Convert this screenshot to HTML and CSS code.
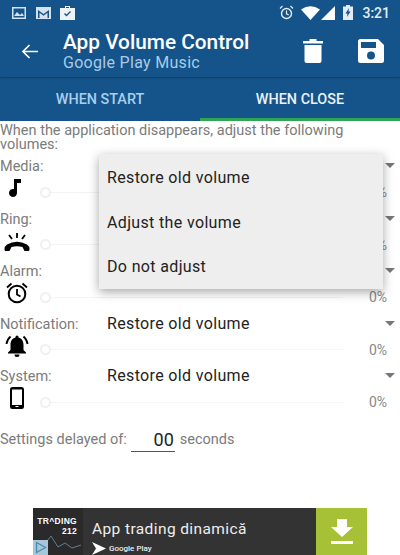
FILE: index.html
```html
<!DOCTYPE html>
<html lang="en">
<head>
    <meta charset="UTF-8">
    <title>App Volume Control</title>
    <link rel="stylesheet" href="styles.css">
</head>
<body>
    <div class="screen">
        <div class="status-bar">
            <svg class="st-icon" width="14" height="12" viewBox="0 0 14 12"><path fill="#d5e2ee" d="M0 0h14v12H0z"/><path fill="#15548a" d="M1.5 1.5h11v9h-11z"/><path fill="#d5e2ee" d="M2 9l3-4 3 3 2-2 2 3z"/></svg>
            <svg class="st-icon gap-m" width="15" height="12" viewBox="0 0 15 12"><path fill="#d5e2ee" d="M0 0h15v12H0z"/><path fill="#15548a" d="M2 3l5.500 4L13 3v8h-1.500V5.800L7.500 8.800 3.500 5.800V11H2z"/></svg>
            <svg class="st-icon gap-b" width="15" height="14" viewBox="0 0 15 14"><path fill="#eef3f8" d="M5 2V0h5v2h5v12H0V2zM6 1v1h3V1z"/><path fill="none" stroke="#15548a" stroke-width="1.300" d="M4.500 7.500l2 2 4-4"/></svg>
            <span class="status-right">
                <svg width="15" height="15" viewBox="0 0 15 15"><circle cx="7.500" cy="8.500" r="5" fill="none" stroke="#e4ecf3" stroke-width="1.400"/><path fill="none" stroke="#e4ecf3" stroke-width="1.200" d="M7.500 5.500v3.300l2.200 1.200M1 3.500L3.500 1M14 3.500L11.500 1"/></svg>
                <svg class="wifi" width="19" height="14" viewBox="0 0 19 14"><path fill="#fff" d="M0 3.500Q9.500-3 19 3.500L9.500 14z"/></svg>
                <svg class="signal" width="14" height="14" viewBox="0 0 14 14"><path fill="#fff" d="M14 0v14H0z"/></svg>
                <svg class="battery" width="10" height="15" viewBox="0 0 10 15"><path fill="#e4ecf3" d="M3 0h4v1.500h3V15H0V1.500h3z"/><path fill="#15548a" d="M6 3L2.500 8.500h2L4 12l3.500-5.500h-2z"/></svg>
                <span class="clock">3:21</span>
            </span>
        </div>

        <div class="toolbar">
            <svg class="back" width="17" height="15" viewBox="0 0 17 15"><path fill="none" stroke="#fff" stroke-width="1.700" d="M17 7.500H2M8.500 1L2 7.500 8.500 14"/></svg>
            <div class="titles">
                <div class="title">App Volume Control</div>
                <div class="subtitle">Google Play Music</div>
            </div>
            <svg class="trash" width="20" height="24" viewBox="0 0 20 24"><path fill="#fff" d="M0 2h6.500V0h7v2H20v2.500H0zM1.500 6h17v16a2 2 0 0 1-2 2h-13a2 2 0 0 1-2-2z"/></svg>
            <svg class="save" width="26" height="24" viewBox="0 0 26 24"><path fill="#fff" fill-rule="evenodd" d="M2.500 0H20l6 6v15.500a2.500 2.500 0 0 1-2.500 2.500h-21A2.500 2.500 0 0 1 0 21.500v-19A2.500 2.500 0 0 1 2.500 0zM3 3v6h15V3zM13 12.500a4 4 0 1 0 0 8 4 4 0 0 0 0-8z"/></svg>
        </div>

        <div class="tabs">
            <div class="tab">WHEN START</div>
            <div class="tab active">WHEN CLOSE</div>
        </div>

        <div class="content">
            <p class="intro">When the application disappears, adjust the following volumes:</p>

            <!-- first three rows have their selected value covered by the open dropdown -->
            <div class="row">
                <span class="label">Media:</span>
                <span class="choice"></span>
                <span class="arrow"></span>
                <svg class="kind" width="24" height="24" viewBox="0 0 24 24"><path d="M9 3h7v4h-4v10a4 4 0 1 1-3-3.900z"/></svg>
                <span class="track"><span class="thumb"></span></span>
                <span class="percent">0%</span>
            </div>
            <div class="row">
                <span class="label">Ring:</span>
                <span class="choice"></span>
                <span class="arrow"></span>
                <svg class="kind ring" width="26" height="24" viewBox="0 0 26 24"><path d="M0.500 20.500Q0.500 17 3 15.500 13 10 23 15.500 25.500 17 25.500 20.500L25 22h-4.500l-2-4q-5.500-1.500-11 0l-2 4H1z"/><path fill="none" stroke="#000" stroke-width="1.800" d="M13 4v5M5 6l3 4M21 6l-3 4"/></svg>
                <span class="track"><span class="thumb"></span></span>
                <span class="percent">0%</span>
            </div>
            <div class="row">
                <span class="label">Alarm:</span>
                <span class="choice"></span>
                <span class="arrow"></span>
                <svg class="kind" width="24" height="24" viewBox="0 0 24 24"><circle cx="12" cy="13" r="8.300" fill="none" stroke="#000" stroke-width="2"/><path fill="none" stroke="#000" stroke-width="1.800" d="M12 8v5.500l3.500 2M2 6.500L6.500 2.500M22 6.500L17.500 2.500"/></svg>
                <span class="track"><span class="thumb"></span></span>
                <span class="percent">0%</span>
            </div>
            <div class="row">
                <span class="label">Notification:</span>
                <span class="choice">Restore old volume</span>
                <span class="arrow"></span>
                <svg class="kind" width="24" height="24" viewBox="0 0 24 24"><path d="M12 1.500a1.500 1.500 0 0 1 1.500 1.500v.6C17 4.500 18.500 7.500 18.500 11v5l2.500 2.500v1H3v-1L5.500 16v-5c0-3.500 1.500-6.500 5-7.400V3A1.500 1.500 0 0 1 12 1.500zM9.500 20.500h5a2.500 2.500 0 0 1-5 0z"/><path fill="none" stroke="#000" stroke-width="1.800" d="M5.500 2.500Q2 5.500 1.500 10M18.500 2.500Q22 5.500 22.500 10"/></svg>
                <span class="track"><span class="thumb"></span></span>
                <span class="percent">0%</span>
            </div>
            <div class="row">
                <span class="label">System:</span>
                <span class="choice">Restore old volume</span>
                <span class="arrow"></span>
                <svg class="kind" width="24" height="24" viewBox="0 0 24 24"><path fill-rule="evenodd" d="M7.500 1h9A2.500 2.500 0 0 1 19 3.500v17a2.500 2.500 0 0 1-2.500 2.500h-9A2.500 2.500 0 0 1 5 20.500v-17A2.500 2.500 0 0 1 7.500 1zM7 3.500V19h10V3.500zM10.500 20v1h3v-1z"/></svg>
                <span class="track"><span class="thumb"></span></span>
                <span class="percent">0%</span>
            </div>

            <div class="delay">
                <span>Settings delayed of:</span>
                <span class="delay-value">00</span>
                <span>seconds</span>
            </div>
        </div>

        <div class="ad">
            <div class="ad-logo">
                <div class="ad-brand">TR^DING<br>212</div>
                <svg class="ad-chart" width="50" height="22" viewBox="0 0 50 22"><path fill="none" stroke="#5d7f8f" stroke-width="1" d="M0 18l10-3 8-10 7 11 7-4 7 5 9-3"/></svg>
                <svg class="ad-mark" width="15" height="15" viewBox="0 0 15 15"><path fill="#a9c6d8" d="M0 0h15v15H0z"/><path fill="none" stroke="#3f8fb5" stroke-width="1.300" d="M3.500 2.500v10l9-5z"/></svg>
            </div>
            <div class="ad-text">
                <div class="ad-title">App trading dinamică</div>
                <div class="ad-store">
                    <svg width="14" height="13" viewBox="0 0 14 13"><path fill="#fff" d="M0 0l14 6.500L0 13l4-6.500z"/></svg>
                    <span>Google Play</span>
                </div>
            </div>
            <div class="ad-button">
                <svg width="22" height="26" viewBox="0 0 22 26"><path fill="#fff" d="M6 0h10v8h6L11 18 0 8h6zM0 22h22v3H0z"/></svg>
            </div>
        </div>

        <div class="popup">
            <div class="popup-item">Restore old volume</div>
            <div class="popup-item">Adjust the volume</div>
            <div class="popup-item">Do not adjust</div>
        </div>
    </div>
</body>
</html>
```

FILE: styles.css
```css
html, body {
    margin: 0;
    padding: 0;
}
body {
    font-family: Roboto, "Liberation Sans", sans-serif;
    background-color: white;
}
.screen {
    position: relative;
    width: 400px;
    height: 555px;
    overflow: hidden;
    display: flex;
    flex-direction: column;
}

/* top bars */
.status-bar {
    height: 25px;
    background-color: #15548a;
    display: flex;
    align-items: center;
    padding: 0 10px 0 12px;
    flex-shrink: 0;
}
.gap-m {
    margin-left: 10px;
}
.gap-b {
    margin-left: 9px;
}
.status-right {
    margin-left: auto;
    display: flex;
    align-items: center;
    color: #e4ecf3;
}
.wifi {
    margin-left: 7px;
}
.signal {
    margin-left: 1px;
}
.battery {
    margin-left: 8px;
}
.clock {
    margin-left: 9px;
    font-size: 14px;
    font-weight: 500;
}
.toolbar {
    height: 52px;
    background-color: #15548a;
    display: flex;
    align-items: center;
    padding-left: 21px;
    flex-shrink: 0;
    box-shadow: 0 1px 2px rgba(0,0,0,0.3);
    position: relative;
}
.titles {
    margin-left: 25px;
    width: 239px;
    margin-top: -1px;
}
.title {
    color: white;
    font-size: 20.8px;
    font-weight: 500;
    line-height: 24px;
}
.subtitle {
    color: #a9cbe6;
    font-size: 16px;
    line-height: 18px;
    letter-spacing: 0.3px;
}
.trash {
    margin-left: 1px;
}
.save {
    margin-left: 35px;
}
.tabs {
    height: 44px;
    background-color: #15548a;
    display: flex;
    flex-shrink: 0;
}
.tab {
    flex: 1;
    text-align: center;
    color: #a9cfee;
    font-size: 14.4px;
    font-weight: 500;
    line-height: 44px;
    padding-top: 1px;
    box-sizing: border-box;
}
.tab.active {
    color: #eaf2f8;
    border-bottom: 3px solid #2fa556;
}

/* volume rows */
.content {
    flex: 1;
    color: #7b7b7b;
    font-size: 14.5px;
}
.intro {
    margin: 3px 0 2px;
    padding-right: 40px;
    line-height: 14px;
}
.row {
    display: grid;
    grid-template-columns: 107px 1fr 22px;
    grid-template-rows: 21px 31.500px;
    height: 52.500px;
    position: relative;
}
.label {
    line-height: 21px;
    margin-top: 2px;
}
.choice {
    color: #222;
    font-size: 16px;
    letter-spacing: 0.35px;
    line-height: 24px;
    grid-column: 2;
}
.arrow {
    width: 0;
    height: 0;
    margin: 9px 0 0 7px;
    border-left: 5px solid transparent;
    border-right: 5px solid transparent;
    border-top: 5px solid #777;
}
.kind {
    position: absolute;
    left: 5px;
    top: 22px;
}
.kind.ring {
    left: 4px;
}
.track {
    grid-column: 1 / 3;
    grid-row: 2;
    margin: 3px 0 0 40px;
    height: 1px;
    align-self: center;
    background-color: #f4f4f4;
    position: relative;
    width: 303px;
}
.thumb {
    position: absolute;
    left: 0;
    top: -5px;
    width: 7px;
    height: 7px;
    border: 2px solid #f0f0f0;
    background-color: white;
    border-radius: 50%;
}
.percent {
    position: absolute;
    right: 13px;
    top: 30px;
    font-size: 14px;
    color: #888;
}
.delay {
    display: flex;
    align-items: flex-end;
    margin-top: 11px;
    height: 24px;
}
.delay-value {
    width: 44px;
    box-sizing: border-box;
    margin: 0 5px 0 4px;
    padding-right: 1px;
    border-bottom: 1px solid #555;
    color: #222;
    font-size: 18px;
    text-align: right;
    line-height: 22px;
}
.delay span:not(.delay-value) {
    line-height: 19px;
    margin-bottom: 3px;
}

/* banner */
.ad {
    position: absolute;
    left: 33px;
    bottom: 0;
    width: 334px;
    height: 47px;
    background-color: #333333;
    display: flex;
}
.ad-logo {
    width: 50px;
    position: relative;
    background-color: #2a2a2a;
}
.ad-brand {
    color: white;
    font-family: "Liberation Sans", sans-serif;
    font-size: 8.500px;
    font-weight: bold;
    line-height: 10px;
    text-align: right;
    padding: 8px 6px 0 0;
    letter-spacing: 0.3px;
}
.ad-chart {
    position: absolute;
    left: 0;
    top: 23px;
}
.ad-mark {
    position: absolute;
    left: 0;
    bottom: 0;
}
.ad-text {
    flex: 1;
    padding: 11px 0 0 9px;
}
.ad-title {
    color: #eeeeee;
    font-size: 15.500px;
    line-height: 20px;
    letter-spacing: 0.4px;
}
.ad-store {
    display: flex;
    align-items: center;
    gap: 3px;
    margin-top: 3px;
    color: #eeeeee;
    font-size: 8px;
    font-weight: 500;
}
.ad-button {
    width: 51px;
    background-color: #a6c135;
    display: flex;
    align-items: center;
    justify-content: center;
}

/* dropdown open over the rows */
.popup {
    position: absolute;
    left: 99px;
    top: 154px;
    width: 284px;
    height: 135px;
    background-color: #eeeeee;
    box-shadow: 0 3px 10px rgba(0,0,0,0.35);
    display: flex;
    flex-direction: column;
    padding-top: 1px;
    box-sizing: border-box;
}
.popup-item {
    flex: 1;
    padding-left: 8px;
    display: flex;
    align-items: center;
    color: #222;
    font-size: 16px;
    letter-spacing: 0.35px;
}
```
